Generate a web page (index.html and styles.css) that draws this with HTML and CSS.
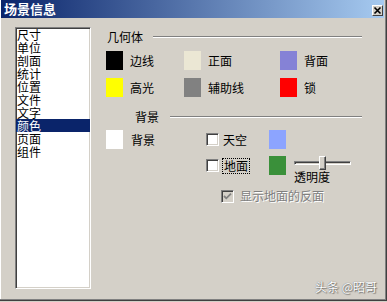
FILE: index.html
```html
<!DOCTYPE html>
<html lang="zh">
<head>
  <meta charset="UTF-8">
  <title>场景信息</title>
  <link rel="stylesheet" href="styles.css">
</head>
<body>
  <div class="window">
    <div class="titlebar">
      <span class="title">场景信息</span>
      <span class="close">
        <svg width="9" height="9" viewBox="0 0 9 9"><path d="M1.5 1.5 L7.5 7.5 M7.5 1.5 L1.5 7.5" stroke="#000" stroke-width="1.6"/></svg>
      </span>
    </div>

    <div class="main">
      <ul class="list">
        <li>尺寸</li>
        <li>单位</li>
        <li>剖面</li>
        <li>统计</li>
        <li>位置</li>
        <li>文件</li>
        <li>文字</li>
        <li class="selected">颜色</li>
        <li>页面</li>
        <li>组件</li>
      </ul>

      <div class="panel">
        <div class="group-head">
          <span>几何体</span>
          <i class="rule"></i>
        </div>
        <div class="swatch-grid">
          <div class="item"><span class="swatch edge"></span>边线</div>
          <div class="item"><span class="swatch front"></span>正面</div>
          <div class="item"><span class="swatch back"></span>背面</div>
          <div class="item"><span class="swatch highlight"></span>高光</div>
          <div class="item"><span class="swatch guide"></span>辅助线</div>
          <div class="item"><span class="swatch lock"></span>锁</div>
        </div>

        <div class="group-head bg-head">
          <span>背景</span>
          <i class="rule"></i>
        </div>
        <div class="bg">
          <div class="item bg-main"><span class="swatch white"></span>背景</div>
          <div class="bg-opts">
            <div class="opt-grid">
              <label class="check"><span class="box"></span>天空</label>
              <span class="swatch sky"></span>
              <span></span>
              <label class="check"><span class="box"></span><span class="focus">地面</span></label>
              <span class="swatch ground"></span>
              <div class="slider-cell">
                <div class="slider">
                  <div class="track"></div>
                  <div class="thumb"></div>
                </div>
                <span class="slider-label">透明度</span>
              </div>
            </div>
            <label class="check disabled">
              <span class="box">
                <svg width="11" height="11" viewBox="0 0 11 11"><path d="M2 5 L4.3 7.3 L9 2.6" fill="none" stroke="#808080" stroke-width="1.8"/></svg>
              </span>
              显示地面的反面
            </label>
          </div>
        </div>
      </div>
    </div>

    <div class="watermark">头条 @昭哥</div>
  </div>
</body>
</html>
```

FILE: styles.css
```css
* { box-sizing: border-box; }
body {
  margin: 0;
  background: #d4d0c8;
  font-family: "Noto Sans CJK SC", "Liberation Sans", sans-serif;
  font-size: 12px;
  color: #000;
}
.window {
  position: relative;
  width: 387px;
  height: 301px;
  background: #d4d0c8;
  border-right: 1px solid #404040;
  border-bottom: 1px solid #404040;
  box-shadow: inset -1px -1px #808080, inset 1px 0 #fff;
  padding: 0 2px 0 1px;
}
.titlebar {
  height: 18px;
  display: flex;
  justify-content: space-between;
  align-items: flex-start;
  padding: 0 1px 0 3px;
  background: linear-gradient(to right, #0a246a, #a6caf0);
}
.title {
  color: #fff;
  font-weight: bold;
  font-size: 13px;
  line-height: 18px;
}
.close {
  margin-top: 5px;
  width: 11px;
  height: 11px;
  display: flex;
  align-items: center;
  justify-content: center;
  background: #d4d0c8;
  border: 1px solid;
  border-color: #fff #404040 #404040 #fff;
}
.main {
  display: flex;
  align-items: flex-start;
  padding: 9px 0 0 14px;
}
.list {
  list-style: none;
  margin: 0;
  padding: 0;
  width: 76px;
  height: 262px;
  background: #fff;
  border: 1px solid;
  border-color: #808080 #fff #fff #808080;
  box-shadow: inset 1px 1px #404040, inset -1px -1px #d4d0c8;
}
.list li {
  height: 13px;
  line-height: 13px;
  padding-left: 1px;
}
.list li.selected {
  background: #0a246a;
  color: #fff;
}
.panel {
  margin-left: 15px;
  width: 256px;
  padding-top: 3px;
}
.group-head {
  display: flex;
  align-items: center;
  gap: 10px;
  height: 14px;
  line-height: 14px;
  padding-left: 1px;
}
.rule {
  flex: 1;
  height: 2px;
  border-top: 1px solid #808080;
  border-bottom: 1px solid #fff;
}
.bg-head {
  margin-top: 13px;
  padding-left: 29px;
  gap: 11px;
}
.swatch-grid {
  margin-top: 7px;
  display: grid;
  grid-template-columns: 78px 96px 1fr;
  grid-auto-rows: 19px;
  row-gap: 8px;
}
.item {
  display: flex;
  align-items: center;
  gap: 7px;
  line-height: 14px;
}
.swatch {
  display: block;
  flex: none;
  width: 17px;
  height: 19px;
}
.edge { background: #000; }
.front { background: #ebe7d4; }
.back { background: #8582d6; }
.highlight { background: #ffff00; }
.guide { background: #818181; }
.lock { background: #ff0000; }
.white { background: #fff; }
.sky { background: #8ca4ff; }
.ground { background: #3a903a; }

.bg {
  margin-top: 6px;
  display: flex;
  align-items: flex-start;
}
.bg-main {
  width: 100px;
  height: 19px;
  gap: 8px;
}
.opt-grid {
  display: grid;
  grid-template-columns: 63px 25px 57px;
  grid-auto-rows: 19px;
  row-gap: 7px;
}
.check {
  display: flex;
  align-items: center;
  gap: 4px;
  line-height: 14px;
}
.box {
  display: flex;
  align-items: center;
  justify-content: center;
  flex: none;
  width: 13px;
  height: 13px;
  background: #fff;
  border: 1px solid;
  border-color: #808080 #fff #fff #808080;
  box-shadow: inset 1px 1px #404040, inset -1px -1px #d4d0c8;
}
.focus {
  outline: 1px dotted #000;
  padding: 0 1px;
}
.slider-cell {
  display: flex;
  flex-direction: column;
}
.slider {
  position: relative;
  width: 57px;
  height: 14px;
  padding-top: 5px;
}
.track {
  height: 4px;
  border: 1px solid;
  border-color: #808080 #fff #fff #808080;
  box-shadow: inset 1px 1px #404040;
}
.thumb {
  position: absolute;
  left: 25px;
  top: 0;
  width: 7px;
  height: 14px;
  background: #d4d0c8;
  border: 1px solid;
  border-color: #fff #404040 #404040 #fff;
  box-shadow: inset -1px -1px #808080;
}
.slider-label {
  margin-top: 6px;
  line-height: 12px;
}
.check.disabled {
  margin: 14px 0 0 15px;
  color: #808080;
  text-shadow: 1px 1px #fff;
  gap: 6px;
}
.check.disabled .box {
  background: #d4d0c8;
}
.watermark {
  position: absolute;
  right: 9px;
  bottom: 5px;
  font-size: 12px;
  color: #fff;
  text-shadow: 0 0 1px #555, 1px 1px 1px rgba(0, 0, 0, 0.4);
}
```
